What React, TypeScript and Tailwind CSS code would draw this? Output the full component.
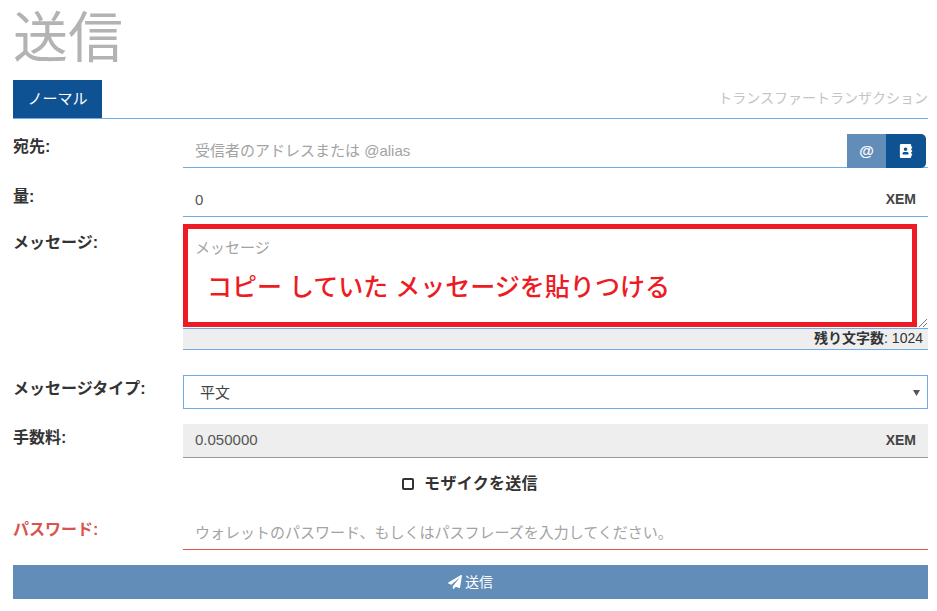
import { FaAddressBook, FaPaperPlane } from "react-icons/fa";

const font = { fontFamily: '"Liberation Sans", "Noto Sans CJK JP", sans-serif' };

function Label({ children, red }: { children: React.ReactNode; red?: boolean }) {
  return (
    <div className={`w-[170px] shrink-0 text-[16px] leading-[20px] font-bold ${red ? "text-[#d9534f]" : "text-[#333333]"}`}>
      {children}
    </div>
  );
}

export default function App() {
  return (
    <div style={font} className="w-[937px] h-[611px] bg-white overflow-hidden pl-[13px] pr-[9px] text-[#333333]">
      <h1 className="h-[80px] pt-[9px] text-[55px] leading-[58px] font-normal text-[#b3b3b3]">送信</h1>

      <div className="h-[39px] flex items-stretch justify-between border-b border-[#6fade9]">
        <div className="w-[89px] bg-[#0e5293] text-white text-[15px] flex items-center justify-center">ノーマル</div>
        <div className="pt-[8px] text-[14px] leading-[20px] text-[#c4c4c4]">トランスファートランザクション</div>
      </div>

      <div className="mt-[15px] flex items-start h-[34px]">
        <div className="pt-[3px]"><Label>宛先:</Label></div>
        <div className="flex-1 h-[34px] flex border-b border-[#6fade9]">
          <div className="flex-1 pl-3 pt-[7px] text-[15px] leading-[20px] text-[#a3a3a3]">受信者のアドレスまたは @alias</div>
          <div className="w-[39px] h-[34px] bg-[#628db8] text-white flex items-center justify-center text-[15px] font-bold">@</div>
          <div className="w-[40px] h-[34px] bg-[#0e5293] rounded-r-[5px] text-white flex items-center justify-center mr-[2px]">
            <FaAddressBook className="w-[14px] h-[14px]" />
          </div>
        </div>
      </div>

      <div className="mt-[15px] flex items-start h-[34px]">
        <div className="pt-[4px]"><Label>量:</Label></div>
        <div className="flex-1 h-[34px] flex items-center justify-between border-b border-[#6fade9] pl-3 pr-3 text-[15px]">
          <span className="text-[#555555] pt-[2px]">0</span>
          <span className="font-bold text-[14px] text-[#444444]">XEM</span>
        </div>
      </div>

      <div className="mt-[7px] flex items-start">
        <div className="pt-[9px]"><Label>メッセージ:</Label></div>
        <div className="flex-1">
          <div className="relative h-[105px] border-b border-[#6fade9]">
            <div className="absolute left-0 top-0 w-[734px] h-[103px] border-[5px] border-[#ed1c24] pointer-events-none" />
            <div className="pl-3 pt-[14px] text-[15px] leading-[20px] text-[#a3a3a3]">メッセージ</div>
            <div className="pl-[24px] pt-[12px] text-[25px] leading-[34px] font-medium text-[#ed1c24] whitespace-nowrap">
              コピー していた メッセージを貼りつける
            </div>
            <svg className="absolute right-0 bottom-0" width="10" height="10" viewBox="0 0 10 10">
              <path d="M1 9 9 1M5 9 9 5" stroke="#777777" strokeWidth="1" fill="none" />
            </svg>
          </div>
          <div className="h-[21px] bg-[#eeeeee] border-b border-[#6fade9] text-right pr-[5px] text-[14px] leading-[19px]">
            <span className="font-bold">残り文字数</span>: 1024
          </div>
        </div>
      </div>

      <div className="mt-[25px] flex items-start h-[34px]">
        <div className="pt-[4px]"><Label>メッセージタイプ:</Label></div>
        <div className="flex-1 h-[34px] border border-[#6fade9] flex items-center justify-between pl-4 pr-[7px] text-[15px]">
          <span className="text-[#444444] pt-[3px]">平文</span>
          <svg width="7" height="7" viewBox="0 0 7 7"><path d="M0 1h7L3.5 7z" fill="#555555" /></svg>
        </div>
      </div>

      <div className="mt-[15px] flex items-start h-[34px]">
        <div className="pt-[4px]"><Label>手数料:</Label></div>
        <div className="flex-1 h-[34px] bg-[#eeeeee] border-b border-[#9a9a9a] flex items-center justify-between pl-3 pr-3 text-[15px]">
          <span className="text-[#555555]">0.050000</span>
          <span className="font-bold text-[14px] text-[#444444]">XEM</span>
        </div>
      </div>

      <div className="mt-[15px] h-[22px] flex items-center justify-center gap-[10px] pr-[1px] text-[16px] font-bold tracking-[0.3px]">
        <span className="w-[12px] h-[12px] rounded-[2px] border-2 border-[#333333]" />
        <span>モザイクを送信</span>
      </div>

      <div className="mt-[21px] flex items-start h-[34px]">
        <div className="pt-[4px]"><Label red>パスワード:</Label></div>
        <div className="flex-1 h-[34px] border-b border-[#d9534f] pl-3 pt-[7px] text-[15px] leading-[20px] text-[#a3a3a3] whitespace-nowrap">
          ウォレットのパスワード、もしくはパスフレーズを入力してください。
        </div>
      </div>

      <div className="mt-[15px] h-[34px] bg-[#628db8] text-white text-[14px] flex items-center justify-center gap-[3px]">
        <FaPaperPlane className="w-[14px] h-[14px]" />
        <span>送信</span>
      </div>
    </div>
  );
}
